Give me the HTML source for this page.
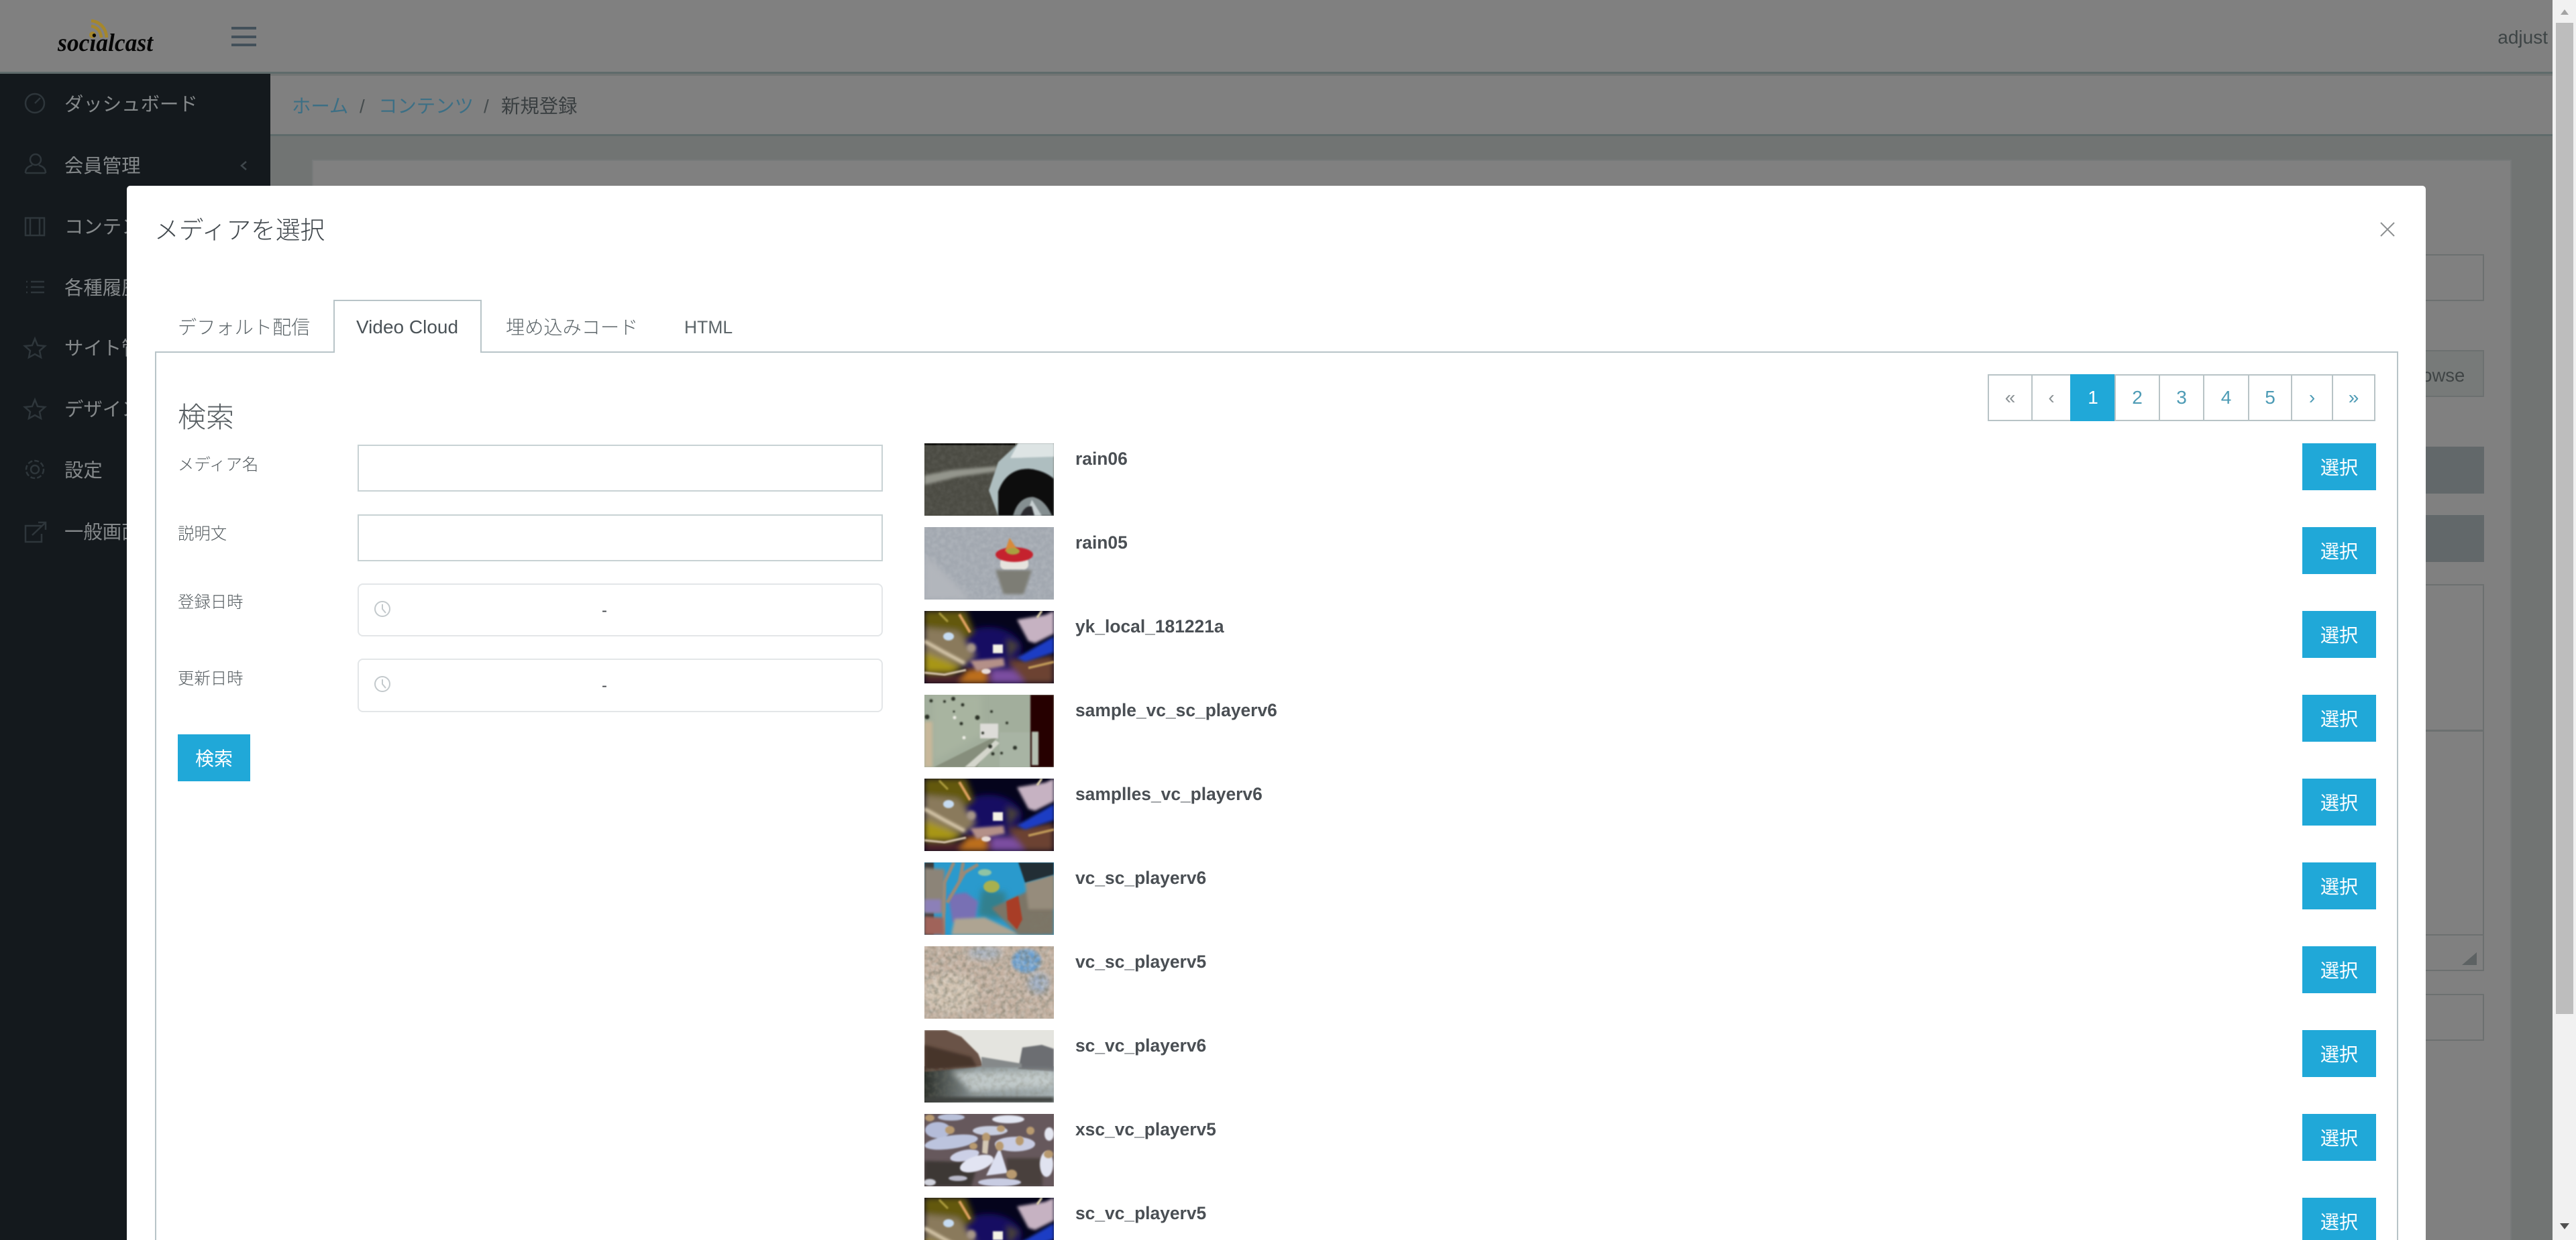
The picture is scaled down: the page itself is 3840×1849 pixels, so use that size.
<!DOCTYPE html>
<html lang="ja"><head><meta charset="utf-8"><title>メディアを選択</title>
<style>
html,body{margin:0;padding:0;width:3840px;height:1849px;overflow:hidden;background:#717473}
body{position:relative;font-family:"Liberation Sans","Noto Sans CJK JP",sans-serif;font-weight:300;color:#4a5257}
.a{position:absolute;box-sizing:border-box}
.t{position:absolute;white-space:nowrap;line-height:1}
.nav{position:absolute;left:96px;font-size:28.4px;line-height:1;white-space:nowrap;color:#85898b;font-weight:400}
.btn{position:absolute;left:3432px;width:110px;height:70px;background:#20a8d8;color:#fff;font-size:28px;line-height:73px;text-align:center;font-weight:400}
.nm{position:absolute;left:1603px;font-size:26.4px;line-height:1;font-weight:700;color:#4a4f54;white-space:nowrap}
.inp{position:absolute;left:533px;width:783px;height:70px;border:2px solid #c8d2d4;background:#fff;box-sizing:border-box}
.dt{position:absolute;left:533px;width:783px;border:2px solid #e3e6e8;border-radius:8px;background:#fff;box-sizing:border-box}
.lb{position:absolute;left:265px;font-size:24.4px;line-height:1;color:#555c60;white-space:nowrap}
.pg{position:absolute;top:558px;height:70px;border:2px solid #b8c3c6;box-sizing:border-box;text-align:center;line-height:66px;font-size:28px;color:#4d9bb5;background:#fff}
</style></head>
<body>
<!-- header -->
<div class="a" style="left:0;top:0;width:3805px;height:110px;background:#808080;border-bottom:3px solid #5f6b6b"></div>
<svg class="a" style="left:131px;top:28px" width="34" height="30" viewBox="0 0 34 30"><g fill="none" stroke="#a5872c" stroke-width="4.5"><path d="M5 3 C17 4 27 13 28 28"/><path d="M5 11 C13 12 19 18 20 28"/></g><circle cx="7" cy="24" r="5" fill="#a5872c"/></svg>
<div class="t" style="left:86px;top:46px;font:italic 700 37px/1 'Liberation Serif',serif;color:#070707;transform:scaleX(.96);transform-origin:left">socialcast</div>
<div class="a" style="left:345px;top:40px;width:37px;height:4px;background:#43505a"></div>
<div class="a" style="left:345px;top:53px;width:37px;height:4px;background:#43505a"></div>
<div class="a" style="left:345px;top:65px;width:37px;height:4px;background:#43505a"></div>
<div class="t" style="right:42px;top:42px;font-size:28px;color:#3d4445;font-weight:400">adjust</div>

<!-- sidebar -->
<div class="a" style="left:0;top:110px;width:403px;height:1739px;background:#14191d"></div>
<div class="nav" style="top:142px">ダッシュボード</div>
<div class="nav" style="top:234px">会員管理</div>
<div class="nav" style="top:325px">コンテンツ</div>
<div class="nav" style="top:416px">各種履歴</div>
<div class="nav" style="top:506px">サイト管理</div>
<div class="nav" style="top:597px">デザイン</div>
<div class="nav" style="top:688px">設定</div>
<div class="nav" style="top:780px">一般画面</div>
<svg class="a" style="left:0;top:110px" width="403" height="800" viewBox="0 110 403 800"><g fill="none" stroke="#2e363b" stroke-width="2.5">
<circle cx="52" cy="154" r="14"/><path d="M52 154 L60 146"/>
<circle cx="53" cy="238" r="8"/><path d="M38 258 C38 248 46 248 48 246 M68 258 C68 248 60 248 58 246 M38 258 H68"/>
<rect x="38" y="325" width="28" height="26"/><path d="M45 325 V351 M59 325 V351"/>
<path d="M46 420 H66 M46 428 H66 M46 436 H66 M39 420 H41 M39 428 H41 M39 436 H41"/>
<path d="M52 505 L56 515 L67 516 L59 523 L61 533 L52 528 L43 533 L45 523 L37 516 L48 515 Z"/>
<path d="M52 596 L56 606 L67 607 L59 614 L61 624 L52 619 L43 624 L45 614 L37 607 L48 606 Z"/>
<circle cx="52" cy="700" r="6"/><circle cx="52" cy="700" r="13" stroke-dasharray="7 3"/>
<path d="M62 784 H38 V808 H62 V796 M48 798 L67 780 M57 779 H68 V790"/>
<path d="M367 241 L360 247 L367 253" stroke="#3f474c"/></g></svg>

<!-- breadcrumb -->
<div class="a" style="left:403px;top:113px;width:3402px;height:90px;background:#808080;border-bottom:3px solid #5f6b6b"></div>
<div class="t" style="left:435px;top:145px;font-size:28.4px;color:#3c6f85;font-weight:400">ホーム</div>
<div class="t" style="left:536px;top:145px;font-size:28px;color:#454b4d;font-weight:400">/</div>
<div class="t" style="left:564px;top:145px;font-size:28.4px;color:#3c6f85;font-weight:400">コンテンツ</div>
<div class="t" style="left:721px;top:145px;font-size:28px;color:#454b4d;font-weight:400">/</div>
<div class="t" style="left:747px;top:145px;font-size:28.4px;color:#3a3f41;font-weight:400">新規登録</div>

<!-- background card -->
<div class="a" style="left:465px;top:238px;width:3279px;height:1611px;background:#808080;border:2px solid #777a7a;border-bottom:0"></div>
<div class="a" style="left:3500px;top:379px;width:203px;height:70px;border:2px solid #6c7070"></div>
<div class="a" style="left:3500px;top:522px;width:203px;height:70px;background:#777a79;border:2px solid #6c7070"></div>
<div class="t" style="left:3601px;top:546px;font-size:27.5px;color:#3f4445;font-weight:400">rowse</div>
<div class="a" style="left:3500px;top:666px;width:203px;height:70px;background:#62686a"></div>
<div class="a" style="left:3500px;top:768px;width:203px;height:70px;background:#62686a"></div>
<div class="a" style="left:3500px;top:871px;width:203px;height:219px;border:2px solid #6c7070"></div>
<div class="a" style="left:3500px;top:1089px;width:203px;height:359px;border:2px solid #6c7070"></div>
<div class="a" style="left:3500px;top:1393px;width:203px;height:2px;background:#6c7070"></div>
<svg class="a" style="left:3670px;top:1418px" width="24" height="22"><path d="M0 21 L22 2 V21 Z" fill="#5d6263"/></svg>
<div class="a" style="left:3500px;top:1482px;width:203px;height:70px;border:2px solid #6c7070"></div>

<!-- scrollbar -->
<div class="a" style="left:3805px;top:0;width:35px;height:1849px;background:#f1f1f1"></div>
<div class="a" style="left:3810px;top:34px;width:26px;height:1478px;background:#bdbdbd"></div>
<svg class="a" style="left:3805px;top:0" width="35" height="1849"><path d="M12 22 L18 14 L24 22 Z" fill="#a3a3a3"/><path d="M11 1824 H25 L18 1833 Z" fill="#505050"/></svg>

<!-- modal -->
<div class="a" style="left:189px;top:277px;width:3427px;height:1600px;background:#fff;border-radius:5px"></div>
<div class="t" style="left:230px;top:326px;font-size:36.7px;color:#40474c">メディアを選択</div>
<svg class="a" style="left:3547px;top:330px" width="24" height="24"><path d="M2 2 L22 22 M22 2 L2 22" stroke="#8c8f90" stroke-width="2" fill="none"/></svg>

<!-- tabs -->
<div class="a" style="left:231px;top:524px;width:3344px;height:1400px;border:2px solid #b8c4c8;background:#fff"></div>
<div class="a" style="left:497px;top:447px;width:221px;height:79px;border:2px solid #b8c4c8;border-bottom:0;background:#fff"></div>
<div class="t" style="left:265px;top:474px;font-size:28.2px;color:#5c6569">デフォルト配信</div>
<div class="t" style="left:531px;top:474px;font-size:28px;color:#4a5257">Video Cloud</div>
<div class="t" style="left:754px;top:474px;font-size:28.2px;color:#5c6569">埋め込みコード</div>
<div class="t" style="left:1020px;top:475px;font-size:26.5px;color:#5c6569">HTML</div>

<!-- search -->
<div class="t" style="left:265px;top:602px;font-size:42px;color:#565d61">検索</div>
<div class="lb" style="top:682px">メディア名</div>
<div class="lb" style="top:785px">説明文</div>
<div class="lb" style="top:887px">登録日時</div>
<div class="lb" style="top:1001px">更新日時</div>
<div class="inp" style="top:663px"></div>
<div class="inp" style="top:767px"></div>
<div class="dt" style="top:870px;height:79px"></div>
<div class="dt" style="top:982px;height:80px"></div>
<svg class="a" style="left:556px;top:893px" width="28" height="140"><g fill="none" stroke="#c3c9cc" stroke-width="2"><circle cx="14" cy="15" r="11"/><path d="M14 8 V15 L19 21"/><circle cx="14" cy="127" r="11"/><path d="M14 120 V127 L19 133"/></g></svg>
<div class="t" style="left:897px;top:899px;font-size:24px;color:#44494d;font-weight:400">-</div>
<div class="t" style="left:897px;top:1011px;font-size:24px;color:#44494d;font-weight:400">-</div>
<div class="a" style="left:265px;top:1095px;width:108px;height:70px;background:#20a8d8;color:#fff;font-size:28px;line-height:73px;text-align:center;font-weight:400">検索</div>

<!-- pagination -->
<div class="pg" style="left:2963px;width:67px;color:#8a9194">«</div>
<div class="pg" style="left:3028px;width:60px;color:#8a9194">‹</div>
<div class="pg" style="left:3086px;width:68px;background:#20a8d8;border-color:#20a8d8;color:#fff;font-weight:400">1</div>
<div class="pg" style="left:3152px;width:68px">2</div>
<div class="pg" style="left:3218px;width:68px">3</div>
<div class="pg" style="left:3284px;width:69px">4</div>
<div class="pg" style="left:3351px;width:66px">5</div>
<div class="pg" style="left:3415px;width:63px">›</div>
<div class="pg" style="left:3476px;width:65px">»</div>

<!-- thumbs -->
<svg class="a" style="left:1378px;top:661px" width="193" height="1188" viewBox="0 0 193 1188">
<defs>
<filter id="s" x="-30%" y="-30%" width="160%" height="160%"><feGaussianBlur stdDeviation="1"/></filter>
<filter id="b" x="-30%" y="-30%" width="160%" height="160%"><feGaussianBlur stdDeviation="2"/></filter>
<filter id="c" x="-40%" y="-40%" width="180%" height="180%"><feGaussianBlur stdDeviation="4.5"/></filter>
<filter id="n" x="0" y="0" width="100%" height="100%"><feTurbulence type="fractalNoise" baseFrequency=".16" numOctaves="2" seed="4"/><feColorMatrix values="0 0 0 0 1  0 0 0 0 1  0 0 0 0 1  1.6 0 0 0 -.55"/><feGaussianBlur stdDeviation=".7"/></filter>
<filter id="d" x="0" y="0" width="100%" height="100%"><feTurbulence type="fractalNoise" baseFrequency=".14" numOctaves="2" seed="9"/><feColorMatrix values="0 0 0 0 .2  0 0 0 0 .2  0 0 0 0 .15  1.8 0 0 0 -.7"/><feGaussianBlur stdDeviation=".7"/></filter>
<linearGradient id="w" x1="0" y1="0" x2="1" y2="0"><stop offset="0" stop-color="#2b2f2a"/><stop offset=".4" stop-color="#8a9496"/><stop offset="1" stop-color="#a6b0b2"/></linearGradient>
<radialGradient id="sky" cx=".5" cy=".55" r=".5"><stop offset="0" stop-color="#180c66"/><stop offset="1" stop-color="#04031a"/></radialGradient>
<clipPath id="cl"><rect width="193" height="108"/></clipPath>
<g id="night" clip-path="url(#cl)">
<rect width="193" height="108" fill="#05041c"/>
<ellipse cx="95" cy="58" rx="50" ry="34" fill="#170c62" filter="url(#c)"/>
<g filter="url(#c)">
<path d="M0 0 H62 L74 32 L55 48 L0 28 Z" fill="#64590f"/>
<path d="M0 25 L50 30 L78 66 L60 82 L0 66 Z" fill="#8a7a5c"/>
<path d="M0 62 L58 84 L40 92 L0 92 Z" fill="#a89612"/>
<path d="M0 95 H193 V108 H0 Z" fill="#52262c"/>
<path d="M62 88 L95 82 L92 108 L52 108 Z" fill="#bc6e1e"/>
<path d="M98 86 L130 86 L155 108 H100 Z" fill="#7c4ea0"/>
<path d="M122 74 L193 66 V108 H150 Z" fill="#6c4232"/>
<path d="M122 40 L142 50 L125 72 Z" fill="#4a4238"/>
</g>
<path d="M138 70 L193 38 V62 L150 76 Z" fill="#1c3cc4" filter="url(#b)"/>
<path d="M138 13 L180 6 L193 0 V34 L165 48 L155 45 Z" fill="#c6b2c2" filter="url(#b)"/>
<path d="M52 5 L68 32" stroke="#dea060" stroke-width="4" filter="url(#s)"/>
<path d="M22 3 L35 16" stroke="#b0a040" stroke-width="3" filter="url(#s)"/>
<rect x="102" y="50" width="15" height="13" fill="#f4f2e4" filter="url(#s)"/>
<ellipse cx="36" cy="38" rx="8" ry="6" fill="#c6dcf2" filter="url(#s)"/>
<path d="M0 45 L30 62 L60 78" stroke="#dccdb0" stroke-width="5" fill="none" filter="url(#b)"/>
<path d="M0 92 L30 95 L62 88" stroke="#dccab4" stroke-width="3" fill="none" filter="url(#s)"/>
<path d="M68 74 L118 70 L120 82 L78 90 Z" fill="#b49088" filter="url(#b)"/>
<ellipse cx="92" cy="90" rx="7" ry="4" fill="#e8dcd8" filter="url(#s)"/>
<ellipse cx="70" cy="55" rx="7" ry="7" fill="#a89888" filter="url(#b)"/>
<path d="M155 85 L193 76" stroke="#c09a58" stroke-width="3.5" filter="url(#s)"/>
<path d="M175 0 L168 10" stroke="#e8dcb0" stroke-width="3" filter="url(#s)"/>
</g>
</defs>
<!-- rain06 -->
<svg y="0" width="193" height="108" viewBox="0 0 193 108"><rect width="193" height="108" fill="#4b4b43"/><rect width="135" height="3" fill="#151512"/><rect width="193" height="108" filter="url(#n)" opacity=".08"/>
<path d="M0 48 L40 40 L108 34 L108 42 L50 50 L0 62 Z" fill="#94968d" filter="url(#b)"/>
<path d="M110 108 L96 70 L110 28 L140 0 H193 V108 Z" fill="#aebec0" filter="url(#s)"/>
<path d="M140 0 H193 V20 L128 22 Z" fill="#dde4e4" filter="url(#s)"/>
<path d="M110 108 L110 72 Q122 38 155 38 Q178 40 193 53 V108 Z" fill="#0b0b0c" filter="url(#s)"/>
<path d="M132 108 Q140 80 162 80 Q180 84 190 108 Z" fill="#858f91" filter="url(#s)"/><path d="M160 84 L175 108 H152 Z" fill="#c8d0d2" filter="url(#s)"/><path d="M143 108 Q150 92 160 94 L164 108Z" fill="#2a2c2e" filter="url(#s)"/>
</svg>
<!-- rain05 -->
<svg y="125" width="193" height="108" viewBox="0 0 193 108"><rect width="193" height="108" fill="#a2a8b0"/><rect width="193" height="108" filter="url(#n)" opacity=".16"/><path d="M0 40 L70 108 H0 Z" fill="#b2b6bc" filter="url(#c)"/>
<path d="M106 64 H160 L148 100 H118 Z" fill="#7d7d74" filter="url(#b)"/>
<rect x="113" y="46" width="42" height="17" rx="7" fill="#e6e4de" filter="url(#s)"/>
<ellipse cx="134" cy="41" rx="28" ry="11" fill="#c5242f" filter="url(#s)"/><path d="M127 16 L120 36 L140 36 Z" fill="#d88a3a" filter="url(#s)"/><ellipse cx="132" cy="36" rx="10" ry="5" fill="#a8a040" filter="url(#s)"/></svg>
<use href="#night" y="250"/>
<!-- sample -->
<svg y="375" width="193" height="108" viewBox="0 0 193 108"><rect width="193" height="108" fill="#a2ae9c"/><path d="M12 100 L85 60 V0 H12 Z" fill="#a8b4a0" filter="url(#c)"/><rect x="0" y="40" width="12" height="68" fill="#c8b89a" filter="url(#b)"/>
<path d="M14 108 L110 60 L78 108 Z" fill="#868e7c" filter="url(#s)"/><rect x="83" y="43" width="27" height="22" fill="#dddcd8" filter="url(#s)"/>
<rect x="112" y="56" width="54" height="52" fill="#a8b4a4" filter="url(#s)"/><path d="M60 108 L106 68 L112 72 L75 108 Z" fill="#d4d6cc" filter="url(#s)"/>
<rect x="158" width="35" height="108" fill="#250606" filter="url(#s)"/><rect x="160" y="55" width="10" height="50" fill="#b4beb0" filter="url(#s)"/>
<g fill="#2c3028" filter="url(#s)"><circle cx="10" cy="9" r="2.5"/><circle cx="30" cy="10" r="2"/><circle cx="43" cy="6" r="3"/><circle cx="57" cy="15" r="2.5"/><circle cx="4" cy="33" r="3.5"/><circle cx="44" cy="25" r="1.5"/><circle cx="79" cy="34" r="3.5"/><circle cx="100" cy="25" r="2"/><circle cx="123" cy="42" r="2"/><circle cx="87" cy="57" r="2"/><circle cx="98" cy="77" r="3"/><circle cx="102" cy="88" r="2.5"/><circle cx="135" cy="79" r="3"/><circle cx="115" cy="87" r="2"/><circle cx="55" cy="43" r="2.5"/></g><g fill="#f0f0e8" filter="url(#s)"><circle cx="45" cy="34" r="2.5"/><circle cx="59" cy="64" r="2.5"/></g></svg>
<use href="#night" y="500"/>
<!-- coral -->
<svg y="625" width="193" height="108" viewBox="0 0 193 108" ><rect width="193" height="108" fill="#2a9acd"/>
<path d="M85 40 L122 45 L118 85 L80 80 Z" fill="#33808e" filter="url(#c)"/>
<path d="M0 0 H14 V108 H0 Z" fill="#3a3a3a" filter="url(#s)"/>
<path d="M0 8 L30 10 L30 75 L0 75 Z" fill="#8c8478" filter="url(#b)"/>
<path d="M35 48 L62 45 L80 58 L76 85 L42 90 Z" fill="#7870b4" filter="url(#b)"/><path d="M0 55 H25 V75 H0 Z" fill="#8c80b8" filter="url(#b)"/>
<path d="M28 108 L30 30 L44 0 M34 60 L60 15 L80 3 M52 30 L58 0" stroke="#9a8a78" stroke-width="5" fill="none" filter="url(#s)"/>
<path d="M0 80 L28 82 L30 108 H0 Z" fill="#a0645a" filter="url(#b)"/>
<path d="M45 84 L90 82 L145 108 H40 Z" fill="#aea492" filter="url(#b)"/>
<path d="M100 68 L150 45 L193 18 V108 H140 Z" fill="#7c7466" filter="url(#b)"/><path d="M150 30 L193 18 V70 L155 70 Z" fill="#968c7c" filter="url(#b)"/>
<path d="M140 0 H193 V18 L150 30 Z" fill="#222e36" filter="url(#s)"/>
<path d="M122 58 L140 50 L146 85 L138 100 L124 85 Z" fill="#a83c28" filter="url(#s)"/>
<ellipse cx="100" cy="36" rx="12" ry="9" fill="#a8b050" filter="url(#s)"/><ellipse cx="90" cy="15" rx="10" ry="5" fill="#90c4a4" filter="url(#s)"/><rect x="150" y="75" width="43" height="33" filter="url(#d)" opacity=".5"/></svg>
<!-- blossoms -->
<svg y="750" width="193" height="108" viewBox="0 0 193 108"><rect width="193" height="108" fill="#c2af9f"/><ellipse cx="152" cy="22" rx="22" ry="18" fill="#6a9ccb" filter="url(#b)"/><ellipse cx="90" cy="10" rx="25" ry="10" fill="#a8b0bc" filter="url(#c)"/><ellipse cx="170" cy="55" rx="16" ry="16" fill="#9aa8bc" filter="url(#c)"/><ellipse cx="40" cy="70" rx="40" ry="30" fill="#cfc0ae" filter="url(#c)"/><rect width="193" height="108" filter="url(#d)" opacity=".8"/><rect width="193" height="108" filter="url(#n)" opacity=".35"/></svg>
<!-- venice -->
<svg y="875" width="193" height="108" viewBox="0 0 193 108"><rect width="193" height="108" fill="#e4e4df"/><rect y="54" width="193" height="54" fill="url(#w)"/>
<path d="M0 0 H32 L55 10 L80 35 L88 54 L0 62 Z" fill="#6b5347" filter="url(#s)"/><path d="M0 22 L70 40 L78 54 L0 60 Z" fill="#463429" filter="url(#b)"/><path d="M146 26 L175 22 L193 28 V62 L140 58 Z" fill="#6c6e72" filter="url(#s)"/><path d="M85 40 L145 50 V56 H85 Z" fill="#85898a" filter="url(#s)"/>
<path d="M40 62 H193 V84 L70 92 Z" fill="#ccd4d4" filter="url(#c)" opacity=".8"/><rect y="56" width="193" height="52" filter="url(#d)" opacity=".35"/><path d="M0 100 H193 V108 H0 Z" fill="#3f433f" filter="url(#b)"/></svg>
<!-- gannets -->
<svg y="1000" width="193" height="108" viewBox="0 0 193 108"><rect width="193" height="108" fill="#66585c"/>
<path d="M0 70 L80 72 L70 108 H0 Z" fill="#3c3834" filter="url(#b)"/><path d="M122 66 H176 V108 H125 Z" fill="#4a403c" filter="url(#b)"/>
<g filter="url(#s)">
<ellipse cx="20" cy="24" rx="19" ry="12" fill="#b4bcd8"/><ellipse cx="40" cy="5" rx="20" ry="5" fill="#b8c0d8"/><ellipse cx="125" cy="8" rx="24" ry="6" fill="#e2e6f2"/><ellipse cx="98" cy="25" rx="26" ry="7" fill="#c8cee0"/>
<ellipse cx="40" cy="42" rx="40" ry="10" transform="rotate(-8 40 42)" fill="#bcc4de"/><ellipse cx="60" cy="62" rx="22" ry="8" transform="rotate(-12 60 62)" fill="#ccd0e6"/>
<ellipse cx="78" cy="74" rx="26" ry="11" transform="rotate(-18 78 74)" fill="#e2e4f2"/>
<path d="M92 92 L112 50 L124 88 Z" fill="#dcdff0"/><ellipse cx="135" cy="45" rx="30" ry="11" fill="#c8cce2"/><ellipse cx="182" cy="75" rx="10" ry="19" fill="#e0e3f0"/><ellipse cx="186" cy="30" rx="7" ry="10" fill="#e4e6f0"/>
<ellipse cx="112" cy="102" rx="32" ry="6" fill="#c8cce2"/><ellipse cx="50" cy="96" rx="14" ry="4" fill="#b8b8c8"/><ellipse cx="8" cy="102" rx="9" ry="5" fill="#d0d2dc"/></g>
<g fill="#b89a70" filter="url(#s)"><ellipse cx="92" cy="35" rx="6" ry="7"/><path d="M87 40 L96 40 L94 60 L86 58 Z" fill="#d4c8b4"/><ellipse cx="112" cy="48" rx="6" ry="7"/><ellipse cx="142" cy="40" rx="6" ry="7"/><ellipse cx="158" cy="25" rx="6" ry="6"/><ellipse cx="130" cy="90" rx="8" ry="7"/><ellipse cx="185" cy="60" rx="7" ry="6"/><ellipse cx="38" cy="24" rx="7" ry="6"/><ellipse cx="73" cy="48" rx="6" ry="5"/><ellipse cx="114" cy="22" rx="6" ry="5"/><ellipse cx="8" cy="6" rx="7" ry="5"/></g></svg>
<use href="#night" y="1125"/>
</svg>

<div class="nm" style="top:671px">rain06</div>
<div class="nm" style="top:796px">rain05</div>
<div class="nm" style="top:921px">yk_local_181221a</div>
<div class="nm" style="top:1046px">sample_vc_sc_playerv6</div>
<div class="nm" style="top:1171px">samplles_vc_playerv6</div>
<div class="nm" style="top:1296px">vc_sc_playerv6</div>
<div class="nm" style="top:1421px">vc_sc_playerv5</div>
<div class="nm" style="top:1546px">sc_vc_playerv6</div>
<div class="nm" style="top:1671px">xsc_vc_playerv5</div>
<div class="nm" style="top:1796px">sc_vc_playerv5</div>

<div class="btn" style="top:661px">選択</div>
<div class="btn" style="top:786px">選択</div>
<div class="btn" style="top:911px">選択</div>
<div class="btn" style="top:1036px">選択</div>
<div class="btn" style="top:1161px">選択</div>
<div class="btn" style="top:1286px">選択</div>
<div class="btn" style="top:1411px">選択</div>
<div class="btn" style="top:1536px">選択</div>
<div class="btn" style="top:1661px">選択</div>
<div class="btn" style="top:1786px">選択</div>
</body></html>
